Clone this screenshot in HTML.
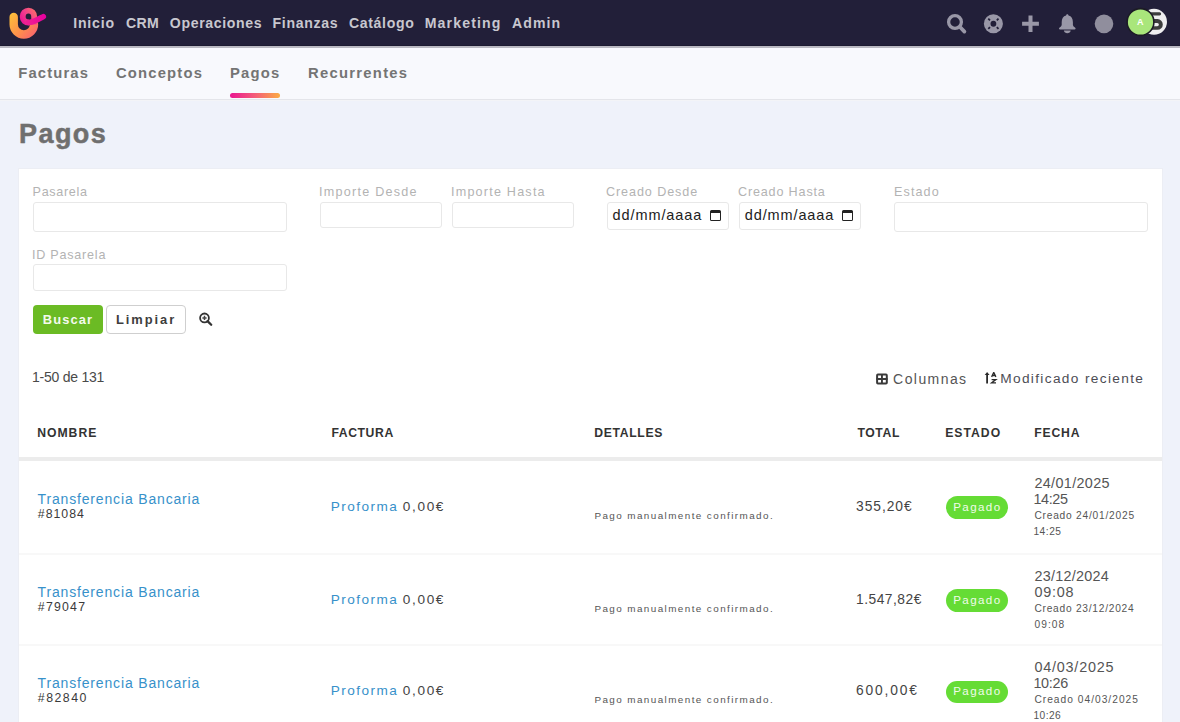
<!DOCTYPE html>
<html><head><meta charset="utf-8"><style>
*{margin:0;padding:0;box-sizing:border-box}
html,body{width:1180px;height:722px;overflow:hidden;background:#eff2fa;font-family:"Liberation Sans",sans-serif;position:relative}
.t{position:absolute;white-space:nowrap;line-height:1}
.a{position:absolute}
</style></head><body>
<!-- nav -->
<div class="a" style="left:0;top:0;width:1180px;height:45px;background:#221f39"></div>
<div class="a" style="left:0;top:45px;width:1180px;height:1px;background:#1c1a31"></div>
<div class="a" style="left:0;top:46px;width:1180px;height:2px;background:#b9b8c1"></div>
<div class="a" style="left:0;top:48px;width:1180px;height:51px;background:#f8f9fd"></div>
<div class="a" style="left:0;top:99px;width:1180px;height:1px;background:#e4e5ea"></div>
<div class="a" style="left:0;top:100px;width:1180px;height:1px;background:#f3f4f7"></div>
<!-- logo -->
<svg class="a" style="left:0;top:0" width="56" height="45" viewBox="0 0 56 45">
<defs>
<linearGradient id="gu" gradientUnits="userSpaceOnUse" x1="12" y1="14" x2="36" y2="34"><stop offset="0" stop-color="#fdbc3a"/><stop offset="0.55" stop-color="#fd8f4c"/><stop offset="1" stop-color="#f9666c"/></linearGradient>
<linearGradient id="gl" gradientUnits="userSpaceOnUse" x1="22" y1="22" x2="36" y2="13"><stop offset="0" stop-color="#ec1694"/><stop offset="0.5" stop-color="#f2418a"/><stop offset="1" stop-color="#f8666f"/></linearGradient>
<linearGradient id="gt" gradientUnits="userSpaceOnUse" x1="28" y1="22" x2="45" y2="16"><stop offset="0" stop-color="#ee1e92"/><stop offset="1" stop-color="#e6009f"/></linearGradient>
</defs>
<path d="M13.7,17 V24.35 A10.15,10.15 0 0 0 34,24.35" fill="none" stroke="url(#gu)" stroke-width="8.4" stroke-linecap="round"/>
<path d="M34.2,24.6 V16.7 A5.75,6.1 0 0 0 22.7,16.7 C22.7,20.5 25.2,22.6 29,22.5" fill="none" stroke="url(#gl)" stroke-width="5.9" stroke-linecap="butt" stroke-linejoin="round"/>
<path d="M28.5,22.5 C33.5,22.3 38.5,19.2 43.3,16.6" fill="none" stroke="url(#gt)" stroke-width="5.6" stroke-linecap="round"/>
</svg>
<!-- underline -->
<div class="a" style="left:230px;top:93px;width:50px;height:5px;border-radius:3px;background:linear-gradient(90deg,#ea1691,#f45d79 50%,#fbac44)"></div>
<!-- card -->
<div class="a" style="left:18px;top:168px;width:1145px;height:560px;background:#eceef4"></div>
<div class="a" style="left:19px;top:169px;width:1143px;height:560px;background:#fff"></div>
<!-- inputs -->
<div class="a" style="left:33px;top:202px;width:254px;height:30px;border:1px solid #e8e8e8;border-radius:3px"></div>
<div class="a" style="left:320px;top:202px;width:122px;height:26px;border:1px solid #e8e8e8;border-radius:3px"></div>
<div class="a" style="left:452px;top:202px;width:122px;height:26px;border:1px solid #e8e8e8;border-radius:3px"></div>
<div class="a" style="left:607px;top:202px;width:122px;height:28px;border:1px solid #e8e8e8;border-radius:3px"></div>
<div class="a" style="left:739px;top:202px;width:122px;height:28px;border:1px solid #e8e8e8;border-radius:3px"></div>
<div class="a" style="left:894px;top:202px;width:254px;height:30px;border:1px solid #e8e8e8;border-radius:3px"></div>
<div class="a" style="left:33px;top:264px;width:254px;height:27px;border:1px solid #e8e8e8;border-radius:3px"></div>
<!-- calendar icons -->
<div class="a" style="left:710px;top:210px;width:11px;height:11px;border:1.8px solid #222;border-top-width:3.6px;border-radius:1.5px"></div>
<div class="a" style="left:842px;top:210px;width:11px;height:11px;border:1.8px solid #222;border-top-width:3.6px;border-radius:1.5px"></div>
<!-- buttons -->
<div class="a" style="left:33px;top:305px;width:70px;height:29px;background:#6bbb24;border-radius:4px"></div>
<div class="a" style="left:106px;top:305px;width:80px;height:29px;border:1px solid #cfcfcf;border-radius:4px;background:#fff"></div>
<svg class="a" style="left:198px;top:312px" width="16" height="16" viewBox="0 0 16 16">
<circle cx="6.5" cy="5.9" r="4.4" fill="none" stroke="#333" stroke-width="1.8"/>
<path d="M9.5,9.1 L13.2,12.8" stroke="#333" stroke-width="2.3" stroke-linecap="round"/>
<path d="M4.4,5.9 H8.6 M6.5,3.8 V8" stroke="#444" stroke-width="1.5"/>
</svg>
<!-- grid icon -->
<svg class="a" style="left:875px;top:373px" width="14" height="13" viewBox="0 0 14 13">
<rect x="2.1" y="1.6" width="9.7" height="8.9" fill="none" stroke="#3a3a3a" stroke-width="2" rx="0.8"/>
<path d="M6.95,1 V11 M1.5,6.05 H12.5" stroke="#3a3a3a" stroke-width="1.9"/>
</svg>
<!-- sort icon -->
<svg class="a" style="left:984px;top:372px" width="14" height="13" viewBox="0 0 14 13">
<path d="M3.1,2.4 V11.5" stroke="#2a2a2a" stroke-width="1.8"/>
<path d="M0.7,3.1 L3.1,0 L5.5,3.1 Z" fill="#2a2a2a"/>
<path d="M7.6,4.9 L9.75,0.4 L11.9,4.9 M8.4,3.5 H11.1" fill="none" stroke="#2a2a2a" stroke-width="1.3"/>
<path d="M7.6,7.6 H11.9 L7.6,10.8 H12" fill="none" stroke="#2a2a2a" stroke-width="1.3" stroke-linejoin="miter"/>
</svg>
<!-- table header border -->
<div class="a" style="left:19px;top:457px;width:1143px;height:4px;background:#ececec"></div>
<div class="a" style="left:19px;top:553px;width:1143px;height:2px;background:#f8f8f8"></div>
<div class="a" style="left:19px;top:644px;width:1143px;height:2px;background:#f8f8f8"></div>
<!-- badges -->
<div class="a" style="left:946px;top:496px;width:62px;height:22.5px;border-radius:12px;background:#65dc35"></div>
<div class="a" style="left:946px;top:589px;width:62px;height:22.5px;border-radius:12px;background:#65dc35"></div>
<div class="a" style="left:946px;top:680.5px;width:62px;height:22.5px;border-radius:12px;background:#65dc35"></div>
<!-- top right icons -->
<svg class="a" style="left:940px;top:5px" width="240" height="36" viewBox="0 0 240 36">
<circle cx="15" cy="17" r="6.4" fill="none" stroke="#9997a7" stroke-width="3.3"/>
<path d="M20,22 L24.4,26.6" stroke="#9997a7" stroke-width="3.7" stroke-linecap="round"/>
<circle cx="53.4" cy="18.75" r="9.5" fill="#9997a7"/>
<circle cx="53.4" cy="18.75" r="2.9" fill="#221f39"/>
<path d="M50.0,15.35 L48.3,13.65 M56.8,15.35 L58.5,13.65 M50.0,22.15 L48.3,23.85 M56.8,22.15 L58.5,23.85" stroke="#221f39" stroke-width="1.8" stroke-linecap="butt"/>
<path d="M82.1,18.75 H98.9 M90.5,10.4 V27.1" stroke="#9997a7" stroke-width="4" stroke-linecap="butt"/>
</svg>
<svg class="a" style="left:1050px;top:5px" width="130" height="36" viewBox="0 0 130 36">
<path d="M17.3,9.2 C18.1,9.2 18.5,9.8 18.5,10.6 C21.5,11.3 22.9,13.8 22.9,17.2 V19.8 C22.9,21 24,22 25.2,22.8 C25.9,23.3 25.7,24.6 24.6,24.6 H10 C8.9,24.6 8.7,23.3 9.4,22.8 C10.6,22 11.7,21 11.7,19.8 V17.2 C11.7,13.8 13.1,11.3 16.1,10.6 C16.1,9.8 16.5,9.2 17.3,9.2 Z" fill="#9997a7"/>
<path d="M13.9,25.4 H20.7 C20.5,27.2 19,28.2 17.3,28.2 C15.6,28.2 14.1,27.2 13.9,25.4 Z" fill="#9997a7"/>
<circle cx="54" cy="18.85" r="9.3" fill="#908e9d"/>
<circle cx="104" cy="16.85" r="13" fill="#efeef0"/>
<path fill-rule="evenodd" d="M98,7.3 H109.6 A1.55,1.55 0 0 1 109.6,10.4 H102 V14.1 H107.5 A5.3,5.3 0 0 1 107.5,24.7 H98 Z M98,17.9 H107.2 A1.7,1.7 0 0 1 107.2,21.3 H98 Z" fill="#3d3d3d"/>
<circle cx="90.5" cy="17" r="13.4" fill="#a9e67b" stroke="#1c1b26" stroke-width="1.6"/>
<text x="90.2" y="19.9" font-family="Liberation Sans" font-weight="700" font-size="9" text-anchor="middle" fill="#fff">A</text>
</svg>

<div class="t" id="nav0" style="left:73.20px;top:16.06px;font-size:14.1px;font-weight:700;color:#c8c7cf;letter-spacing:0.820px;">Inicio</div>
<div class="t" id="nav1" style="left:125.90px;top:16.06px;font-size:14.1px;font-weight:700;color:#c8c7cf;letter-spacing:0.400px;">CRM</div>
<div class="t" id="nav2" style="left:169.80px;top:16.06px;font-size:14.1px;font-weight:700;color:#c8c7cf;letter-spacing:0.640px;">Operaciones</div>
<div class="t" id="nav3" style="left:272.60px;top:16.06px;font-size:14.1px;font-weight:700;color:#c8c7cf;letter-spacing:0.657px;">Finanzas</div>
<div class="t" id="nav4" style="left:348.90px;top:16.06px;font-size:14.1px;font-weight:700;color:#c8c7cf;letter-spacing:0.669px;">Catálogo</div>
<div class="t" id="nav5" style="left:424.70px;top:16.06px;font-size:14.1px;font-weight:700;color:#c8c7cf;letter-spacing:1.150px;">Marketing</div>
<div class="t" id="nav6" style="left:512.00px;top:16.06px;font-size:14.1px;font-weight:700;color:#c8c7cf;letter-spacing:1.050px;">Admin</div>
<div class="t" id="sub0" style="left:18.20px;top:66.37px;font-size:14.8px;font-weight:700;color:#747474;letter-spacing:1.156px;">Facturas</div>
<div class="t" id="sub1" style="left:116.00px;top:66.37px;font-size:14.8px;font-weight:700;color:#747474;letter-spacing:1.175px;">Conceptos</div>
<div class="t" id="sub2" style="left:230.00px;top:66.37px;font-size:14.8px;font-weight:700;color:#747474;letter-spacing:1.225px;">Pagos</div>
<div class="t" id="sub3" style="left:308.00px;top:66.37px;font-size:14.8px;font-weight:700;color:#747474;letter-spacing:1.270px;">Recurrentes</div>
<div class="t" id="title" style="left:19.10px;top:121.34px;font-size:27px;font-weight:700;color:#6f6f6f;letter-spacing:1.400px;-webkit-text-stroke:0.5px #6f6f6f;">Pagos</div>
<div class="t" id="lab0" style="left:32.60px;top:186.13px;font-size:12.6px;font-weight:400;color:#b3b3b3;letter-spacing:0.662px;">Pasarela</div>
<div class="t" id="lab1" style="left:319.00px;top:186.13px;font-size:12.6px;font-weight:400;color:#b3b3b3;letter-spacing:1.243px;">Importe Desde</div>
<div class="t" id="lab2" style="left:451.00px;top:186.13px;font-size:12.6px;font-weight:400;color:#b3b3b3;letter-spacing:1.208px;">Importe Hasta</div>
<div class="t" id="lab3" style="left:606.00px;top:186.13px;font-size:12.6px;font-weight:400;color:#b3b3b3;letter-spacing:0.909px;">Creado Desde</div>
<div class="t" id="lab4" style="left:738.00px;top:186.13px;font-size:12.6px;font-weight:400;color:#b3b3b3;letter-spacing:0.831px;">Creado Hasta</div>
<div class="t" id="lab5" style="left:894.00px;top:186.13px;font-size:12.6px;font-weight:400;color:#b3b3b3;letter-spacing:1.100px;">Estado</div>
<div class="t" id="lab6" style="left:32.00px;top:248.73px;font-size:12.6px;font-weight:400;color:#b3b3b3;letter-spacing:0.760px;">ID Pasarela</div>
<div class="t" id="date0" style="left:612.60px;top:208.13px;font-size:14.5px;font-weight:400;color:#222;letter-spacing:0.904px;">dd/mm/aaaa</div>
<div class="t" id="date1" style="left:744.80px;top:208.13px;font-size:14.5px;font-weight:400;color:#222;letter-spacing:0.874px;">dd/mm/aaaa</div>
<div class="t" id="buscar" style="left:42.80px;top:314.08px;font-size:12.9px;font-weight:700;color:#f4faee;letter-spacing:1.100px;">Buscar</div>
<div class="t" id="limpiar" style="left:116.00px;top:314.08px;font-size:12.9px;font-weight:700;color:#3d3d3d;letter-spacing:1.931px;">Limpiar</div>
<div class="t" id="count" style="left:32.00px;top:369.75px;font-size:14px;font-weight:400;color:#4a4a4a;letter-spacing:-0.240px;">1-50 de 131</div>
<div class="t" id="columnas" style="left:893.10px;top:372.15px;font-size:14px;font-weight:400;color:#555;letter-spacing:1.428px;">Columnas</div>
<div class="t" id="modif" style="left:1000.20px;top:372.40px;font-size:13.7px;font-weight:400;color:#4d4d55;letter-spacing:1.339px;">Modificado reciente</div>
<div class="t" id="h0" style="left:37.20px;top:426.67px;font-size:12.2px;font-weight:700;color:#333;letter-spacing:1.000px;">NOMBRE</div>
<div class="t" id="h1" style="left:331.40px;top:426.67px;font-size:12.2px;font-weight:700;color:#333;letter-spacing:0.600px;">FACTURA</div>
<div class="t" id="h2" style="left:594.20px;top:426.67px;font-size:12.2px;font-weight:700;color:#333;letter-spacing:0.682px;">DETALLES</div>
<div class="t" id="h3" style="left:857.40px;top:426.67px;font-size:12.2px;font-weight:700;color:#333;letter-spacing:0.625px;">TOTAL</div>
<div class="t" id="h4" style="left:945.20px;top:426.67px;font-size:12.2px;font-weight:700;color:#333;letter-spacing:1.020px;">ESTADO</div>
<div class="t" id="h5" style="left:1034.20px;top:426.67px;font-size:12.2px;font-weight:700;color:#333;letter-spacing:0.850px;">FECHA</div>
<div class="t" id="tb0" style="left:37.60px;top:492.35px;font-size:14px;font-weight:400;color:#3791ca;letter-spacing:0.834px;">Transferencia Bancaria</div>
<div class="t" id="num0" style="left:37.80px;top:507.59px;font-size:12.3px;font-weight:400;color:#3a3a3a;letter-spacing:1.000px;">#81084</div>
<div class="t" id="prof0" style="left:330.80px;top:500.49px;font-size:13.6px;font-weight:400;color:#3791ca;letter-spacing:1.429px;">Proforma</div>
<div class="t" id="amt0" style="left:402.80px;top:500.49px;font-size:13.6px;font-weight:400;color:#444;letter-spacing:1.650px;">0,00€</div>
<div class="t" id="det0" style="left:594.40px;top:510.62px;font-size:9.9px;font-weight:400;color:#555;letter-spacing:1.417px;">Pago manualmente confirmado.</div>
<div class="t" id="tot0" style="left:856.00px;top:500.32px;font-size:13.8px;font-weight:400;color:#444;letter-spacing:0.964px;">355,20€</div>
<div class="t" id="pag0" style="left:953.20px;top:501.18px;font-size:11.6px;font-weight:400;color:#effbe9;letter-spacing:1.400px;">Pagado</div>
<div class="t" id="d0" style="left:1034.40px;top:475.81px;font-size:14.4px;font-weight:400;color:#555;letter-spacing:0.351px;">24/01/2025</div>
<div class="t" id="hh0" style="left:1033.40px;top:491.81px;font-size:14.4px;font-weight:400;color:#555;letter-spacing:-0.350px;">14:25</div>
<div class="t" id="cr0" style="left:1034.40px;top:511.37px;font-size:10.2px;font-weight:400;color:#555;letter-spacing:0.781px;">Creado 24/01/2025</div>
<div class="t" id="hs0" style="left:1033.40px;top:527.37px;font-size:10.2px;font-weight:400;color:#555;letter-spacing:0.525px;">14:25</div>
<div class="t" id="tb1" style="left:37.60px;top:585.35px;font-size:14px;font-weight:400;color:#3791ca;letter-spacing:0.834px;">Transferencia Bancaria</div>
<div class="t" id="num1" style="left:37.80px;top:600.59px;font-size:12.3px;font-weight:400;color:#3a3a3a;letter-spacing:1.240px;">#79047</div>
<div class="t" id="prof1" style="left:330.80px;top:593.49px;font-size:13.6px;font-weight:400;color:#3791ca;letter-spacing:1.429px;">Proforma</div>
<div class="t" id="amt1" style="left:402.80px;top:593.49px;font-size:13.6px;font-weight:400;color:#444;letter-spacing:1.650px;">0,00€</div>
<div class="t" id="det1" style="left:594.40px;top:603.62px;font-size:9.9px;font-weight:400;color:#555;letter-spacing:1.417px;">Pago manualmente confirmado.</div>
<div class="t" id="tot1" style="left:856.00px;top:593.32px;font-size:13.8px;font-weight:400;color:#444;letter-spacing:0.500px;">1.547,82€</div>
<div class="t" id="pag1" style="left:953.20px;top:594.18px;font-size:11.6px;font-weight:400;color:#effbe9;letter-spacing:1.400px;">Pagado</div>
<div class="t" id="d1" style="left:1034.40px;top:568.81px;font-size:14.4px;font-weight:400;color:#555;letter-spacing:0.269px;">23/12/2024</div>
<div class="t" id="hh1" style="left:1034.40px;top:584.81px;font-size:14.4px;font-weight:400;color:#555;letter-spacing:0.750px;">09:08</div>
<div class="t" id="cr1" style="left:1034.40px;top:604.37px;font-size:10.2px;font-weight:400;color:#555;letter-spacing:0.755px;">Creado 23/12/2024</div>
<div class="t" id="hs1" style="left:1034.40px;top:620.37px;font-size:10.2px;font-weight:400;color:#555;letter-spacing:1.100px;">09:08</div>
<div class="t" id="tb2" style="left:37.60px;top:676.35px;font-size:14px;font-weight:400;color:#3791ca;letter-spacing:0.834px;">Transferencia Bancaria</div>
<div class="t" id="num2" style="left:37.80px;top:691.59px;font-size:12.3px;font-weight:400;color:#3a3a3a;letter-spacing:1.520px;">#82840</div>
<div class="t" id="prof2" style="left:330.80px;top:684.49px;font-size:13.6px;font-weight:400;color:#3791ca;letter-spacing:1.429px;">Proforma</div>
<div class="t" id="amt2" style="left:402.80px;top:684.49px;font-size:13.6px;font-weight:400;color:#444;letter-spacing:1.650px;">0,00€</div>
<div class="t" id="det2" style="left:594.40px;top:694.62px;font-size:9.9px;font-weight:400;color:#555;letter-spacing:1.417px;">Pago manualmente confirmado.</div>
<div class="t" id="tot2" style="left:856.00px;top:684.32px;font-size:13.8px;font-weight:400;color:#444;letter-spacing:1.851px;">600,00€</div>
<div class="t" id="pag2" style="left:953.20px;top:685.18px;font-size:11.6px;font-weight:400;color:#effbe9;letter-spacing:1.400px;">Pagado</div>
<div class="t" id="d2" style="left:1034.40px;top:659.81px;font-size:14.4px;font-weight:400;color:#555;letter-spacing:0.793px;">04/03/2025</div>
<div class="t" id="hh2" style="left:1033.40px;top:675.81px;font-size:14.4px;font-weight:400;color:#555;letter-spacing:-0.300px;">10:26</div>
<div class="t" id="cr2" style="left:1034.40px;top:695.37px;font-size:10.2px;font-weight:400;color:#555;letter-spacing:1.020px;">Creado 04/03/2025</div>
<div class="t" id="hs2" style="left:1033.40px;top:711.37px;font-size:10.2px;font-weight:400;color:#555;letter-spacing:0.475px;">10:26</div>
</body></html>
